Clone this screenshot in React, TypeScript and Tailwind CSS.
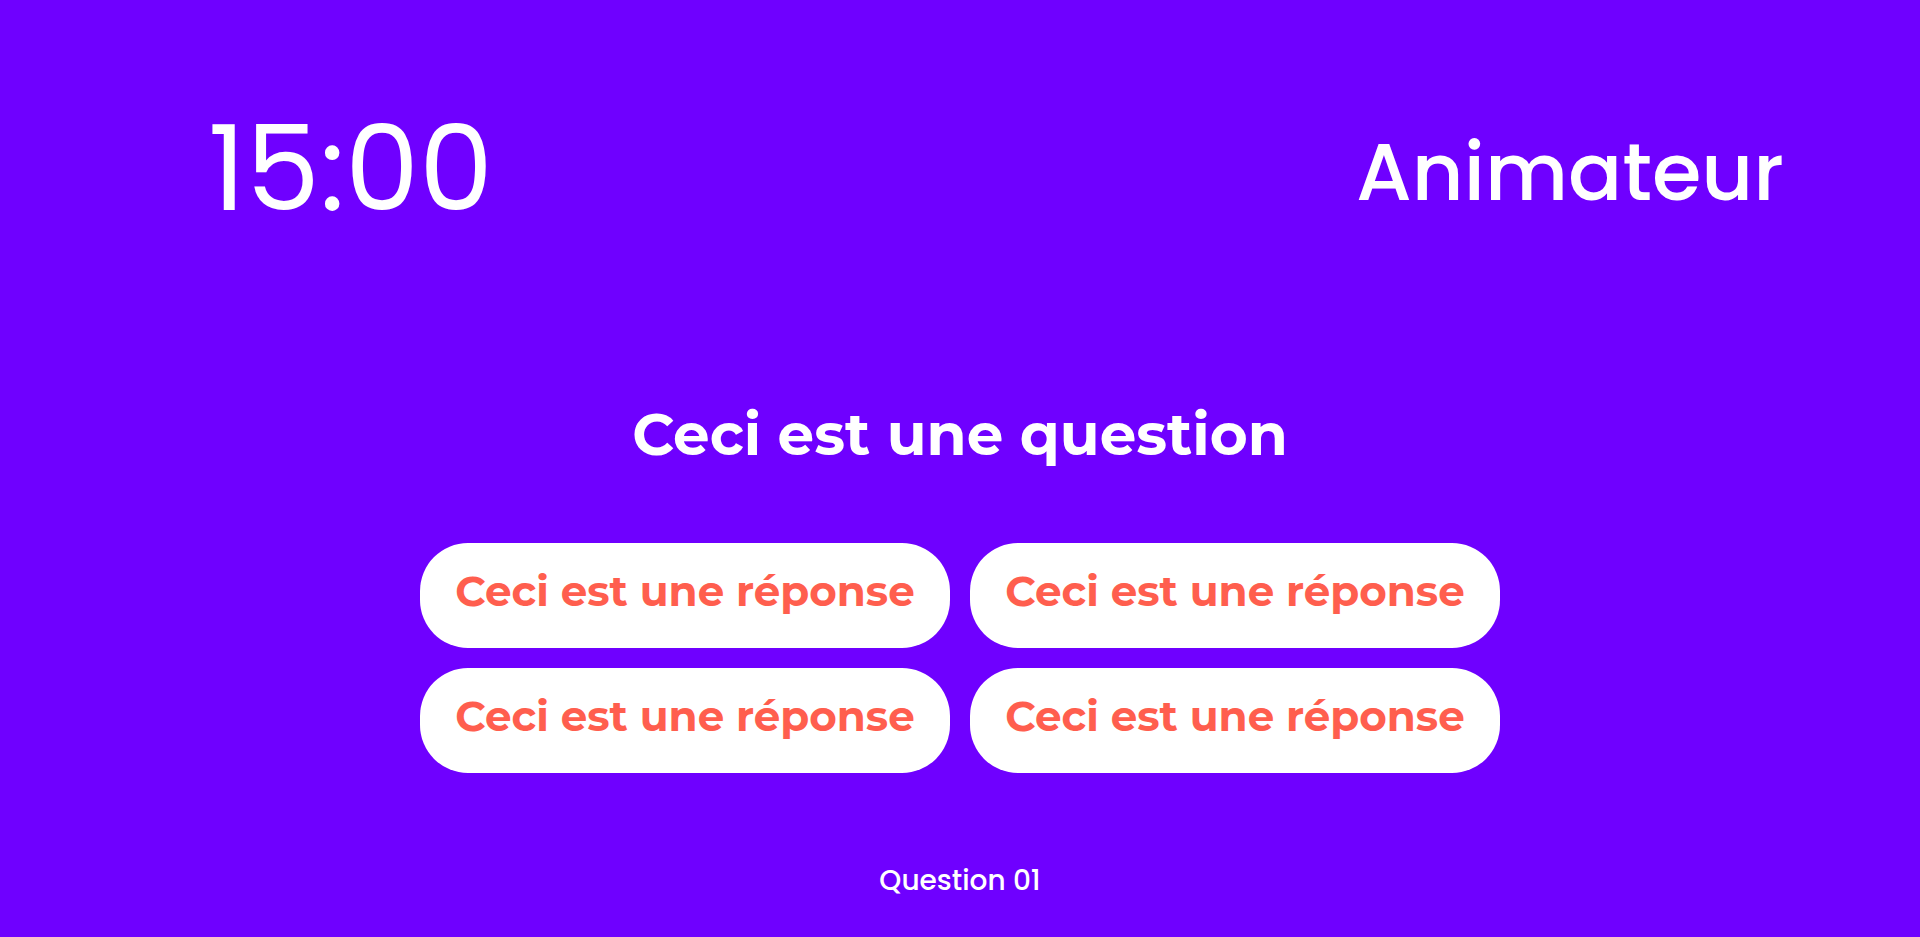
const answers = ["Ceci est une réponse", "Ceci est une réponse", "Ceci est une réponse", "Ceci est une réponse"];

export default function App() {
  return (
    <div className="h-[937px] w-full bg-[#6f00ff] text-white flex flex-col font-['Poppins','Open_Sans',sans-serif]">
      <header className="flex items-center justify-between pl-[208px] pr-[136px] pt-[110px]">
        <div className="text-[118px] leading-none font-normal">15:00</div>
        <div className="text-[80px] leading-none font-medium mt-[6px]">Animateur</div>
      </header>

      <main className="flex flex-col items-center mt-[178px]">
        <h1 className="text-[58px] leading-none font-bold font-['Montserrat','Open_Sans',sans-serif]">
          Ceci est une question
        </h1>
        <div className="grid grid-cols-[530px_530px] gap-5 mt-[79px]">
          {answers.map((a, i) => (
            <button
              key={i}
              className="h-[105px] pb-[8px] rounded-[48px] bg-white text-[#ff5e4e] text-[42px] font-bold font-['Montserrat','Open_Sans',sans-serif]"
            >
              {a}
            </button>
          ))}
        </div>
      </main>

      <footer className="mt-auto mb-[35px] text-center text-[28px] font-medium">Question 01</footer>
    </div>
  );
}
